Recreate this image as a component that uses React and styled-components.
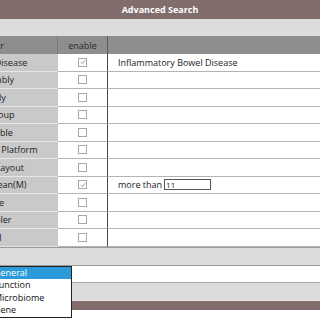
import React from 'react'
import styled, { createGlobalStyle } from 'styled-components'

const GlobalStyle = createGlobalStyle`
  html, body {
    margin: 0;
    background: #fff;
  }
  body {
    font-family: "Open Sans", "Liberation Sans", sans-serif;
    font-size: 9px;
    color: #222;
  }
`

const Frame = styled.div`
  width: 320px;
  height: 320px;
  overflow: hidden;
`

const Page = styled.div`
  width: 460px;
  margin-left: -70px;
`

const TitleBar = styled.div`
  height: 19px;
  background: #806d6c;
  color: #fff;
  font-weight: 700;
  font-size: 9px;
  display: flex;
  align-items: center;
  justify-content: center;
`

const Band = styled.div`
  height: ${p => p.$h}px;
  background: #dcdcdc;
  border-top: ${p => (p.$top ? `1px solid ${p.$top}` : 'none')};
  border-bottom: ${p => (p.$bottom ? `1px solid ${p.$bottom}` : 'none')};
`

const Row = styled.div`
  display: grid;
  grid-template-columns: 128px 50px 1fr;
  height: ${p => p.$h}px;
`

const HeadCell = styled.div`
  background: #8e8e8e;
  color: #2a2a2a;
  display: flex;
  align-items: center;
  justify-content: center;
  border-right: 1px solid ${p => p.$edge || '#7a7a7a'};
`

const LabelCell = styled.div`
  background: #c9c9c9;
  border-bottom: 1px solid #e6e6e6;
  display: flex;
  align-items: center;
  justify-content: center;
  white-space: nowrap;
`

const CheckCell = styled.div`
  background: #fff;
  border-bottom: 1px solid #b4b4b4;
  border-right: 1px solid #4a4a4a;
  display: flex;
  align-items: center;
  justify-content: center;
`

const ValueCell = styled.div`
  background: #fff;
  border-bottom: 1px solid #b4b4b4;
  display: flex;
  align-items: center;
  padding-left: 10px;
  white-space: nowrap;
`

const Box = styled.span`
  width: 7px;
  height: 7px;
  border: 1px solid #a8a8a8;
  background: #fff;
  display: flex;
  align-items: center;
  justify-content: center;
`

const SmallInput = styled.span`
  width: 44px;
  height: 9px;
  border: 1px solid #555;
  margin-left: 2px;
  font-size: 8px;
  line-height: 9px;
  padding-left: 1px;
  background: #fff;
`

const SelectRow = styled.div`
  position: relative;
  z-index: 5;
  height: 16.5px;
  background: #fff;
  border-bottom: 1px solid #a8a8a8;
`

const ListBox = styled.ul`
  position: absolute;
  left: 60px;
  top: 0;
  z-index: 10;
  width: 80px;
  margin: 0;
  padding: 0;
  list-style: none;
  background: #fff;
  border: 1px solid #222;
`

const Option = styled.li`
  height: 12.5px;
  line-height: 12.5px;
  padding-left: 3px;
  background: ${p => (p.$active ? '#2b9bd9' : '#fff')};
  color: ${p => (p.$active ? '#fff' : '#111')};
`

const BrownBar = styled.div`
  height: 9px;
  background: #806d6c;
  border-top: 1px solid #ece6e2;
`

const rows = [
  { label: 'Related Disease', checked: true, value: 'Inflammatory Bowel Disease' },
  { label: 'Assembly' },
  { label: 'Study' },
  { label: 'Subgroup' },
  { label: 'Available' },
  { label: 'Sequencing Platform' },
  { label: 'Library Layout' },
  { label: 'Reads Mean(M)', checked: true, more: '11' },
  { label: 'Type' },
  { label: 'Sampler' },
  { label: 'Soil' }
]

const Check = ({ checked }) => (
  <Box>
    {checked && (
      <svg width="6" height="6" viewBox="0 0 6 6">
        <path d="M0.8 3.1 L2.4 4.6 L5.3 1.2" fill="none" stroke="#8a8a8a" strokeWidth="0.9" />
      </svg>
    )}
  </Box>
)

const App = () => (
  <Frame>
    <GlobalStyle />
    <Page>
      <TitleBar>Advanced Search</TitleBar>
      <Band $h={17} />
      <Row $h={18}>
        <HeadCell>Filter</HeadCell>
        <HeadCell $edge="#5a5a5a">enable</HeadCell>
        <HeadCell $edge="transparent" />
      </Row>
      {rows.map(r => (
        <Row key={r.label} $h={17.5}>
          <LabelCell>{r.label}</LabelCell>
          <CheckCell>
            <Check checked={r.checked} />
          </CheckCell>
          <ValueCell>
            {r.value}
            {r.more && (
              <>
                more than<SmallInput>{r.more}</SmallInput>
              </>
            )}
          </ValueCell>
        </Row>
      ))}
      <Band $h={17} $top="#9a9a9a" $bottom="#9a9a9a" />
      <SelectRow>
        <ListBox>
          <Option $active>General</Option>
          <Option>Function</Option>
          <Option>Microbiome</Option>
          <Option>Gene</Option>
        </ListBox>
      </SelectRow>
      <Band $h={17} />
      <BrownBar />
    </Page>
  </Frame>
)

export default App
